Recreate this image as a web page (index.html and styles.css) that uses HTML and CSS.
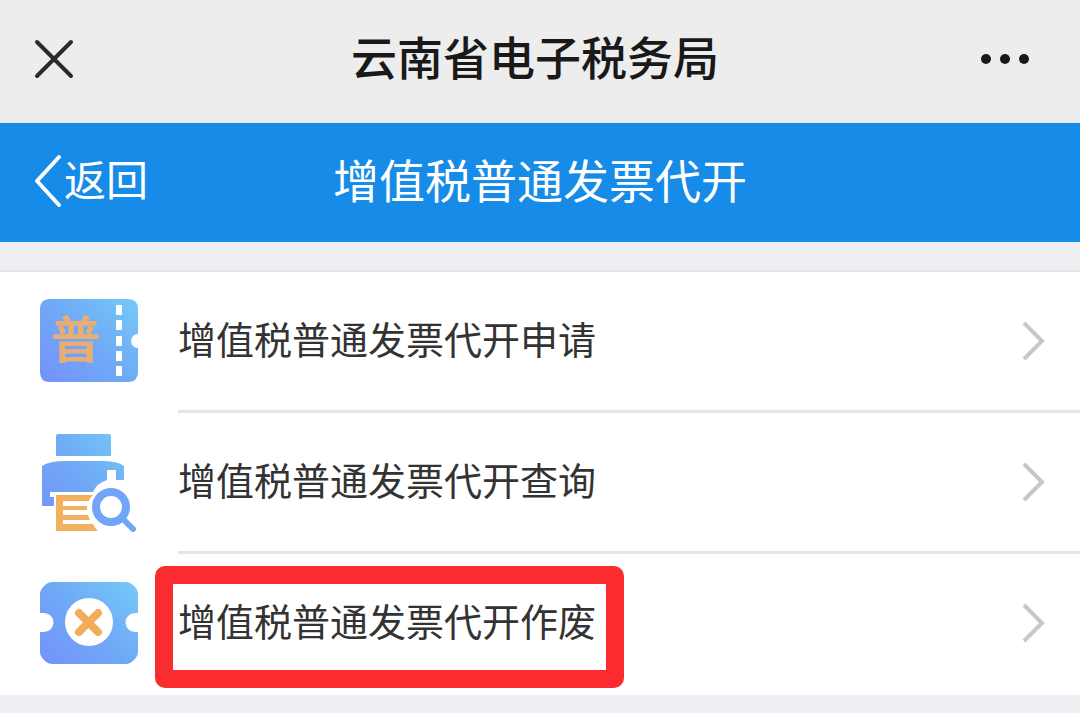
FILE: index.html
```html
<!DOCTYPE html>
<html lang="zh-CN">
<head>
<meta charset="utf-8">
<meta name="viewport" content="width=device-width, initial-scale=1">
<title>云南省电子税务局</title>
<link rel="stylesheet" href="styles.css">
</head>
<body>
<header class="bar app-bar">
  <button class="icon-button" type="button" aria-label="关闭">
    <svg class="close-icon" width="40" height="40" viewBox="0 0 40 40"><path d="M3 3L37 37M37 3L3 37"/></svg>
  </button>
  <h1 class="app-title">云南省电子税务局</h1>
  <button class="icon-button more-button" type="button" aria-label="更多">
    <svg class="more-icon" width="56" height="12" viewBox="0 0 56 12"><circle cx="6" cy="6" r="5"/><circle cx="25" cy="6" r="5"/><circle cx="44" cy="6" r="5"/></svg>
  </button>
</header>
<nav class="bar nav-bar">
  <a class="back" href="#">
    <svg class="back-icon" width="30" height="58" viewBox="0 0 30 58"><path d="M25 8L3 32L25 56"/></svg>
    <span>返回</span>
  </a>
  <h2 class="nav-title">增值税普通发票代开</h2>
</nav>
<main>
  <ul class="menu">
    <li>
      <a class="row" href="#">
        <svg class="row-icon" width="100" height="100" viewBox="0 0 100 100" aria-hidden="true">
          <defs>
            <linearGradient id="sky" gradientUnits="userSpaceOnUse" x1="0" y1="92" x2="92" y2="0">
              <stop offset="0" stop-color="#7590fb"/><stop offset=".5" stop-color="#70a9f6"/><stop offset="1" stop-color="#73cbf8"/>
            </linearGradient>
          </defs>
          <path fill="url(#sky)" d="M11 8H89Q99 8 99 18V43A7 7 0 0 0 99 57V81Q99 91 89 91H11Q1 91 1 81V18Q1 8 11 8Z"/>
          <path class="perforation" d="M80 14V24M80 29V39M80 45V55M80 60V70M80 75V85"/>
          <text class="stamp" x="37" y="67" text-anchor="middle">普</text>
        </svg>
        <span class="row-body"><span class="label">增值税普通发票代开申请</span>
        <svg class="chevron" width="24" height="40" viewBox="0 0 24 40"><path d="M2 2L20 20L2 38"/></svg></span>
      </a>
    </li>
    <li>
      <a class="row" href="#">
        <svg class="row-icon" width="100" height="100" viewBox="0 0 100 100" aria-hidden="true">
          <path fill="url(#sky)" d="M19 2H70Q72 2 72 4V24H17V4Q17 2 19 2Z"/>
          <path fill="url(#sky)" d="M3 34Q10 29 27 29H62Q79 29 85 34V48H77V38H68V48Q58 51 54 60H11V65H15V74H3Z"/>
          <path fill="#f2b25d" d="M17 63H54Q51 66 50 69H24V74H48V78H24V83H49Q50 86 51 88H24V92H54Q56 96 59 99H17Z"/>
          <circle cx="72" cy="75" r="15" fill="none" stroke="#71a5f7" stroke-width="8"/>
          <path d="M84 87L94 97" stroke="#71a5f7" stroke-width="6" stroke-linecap="round"/>
        </svg>
        <span class="row-body"><span class="label">增值税普通发票代开查询</span>
        <svg class="chevron" width="24" height="40" viewBox="0 0 24 40"><path d="M2 2L20 20L2 38"/></svg></span>
      </a>
    </li>
    <li>
      <a class="row" href="#">
        <svg class="row-icon" width="100" height="100" viewBox="0 0 100 100" aria-hidden="true">
          <path fill="url(#sky)" d="M13 9H87Q91 9 95 13T99 21V40H96A9 9 0 0 0 96 59H99V79Q99 83 95 87T87 91H13Q9 91 5 87T1 79V59H5A9 9 0 0 0 5 40H1V21Q1 17 5 13T13 9Z"/>
          <circle cx="50" cy="49" r="24" fill="#fff"/>
          <path d="M40 40L59 59M59 40L40 59" stroke="#f2ad5b" stroke-width="8" stroke-linecap="round"/>
        </svg>
        <span class="row-body"><span class="label highlighted">增值税普通发票代开作废</span>
        <svg class="chevron" width="24" height="40" viewBox="0 0 24 40"><path d="M2 2L20 20L2 38"/></svg></span>
      </a>
    </li>
  </ul>
</main>
</body>
</html>
```
FILE: styles.css
```css
* {
  box-sizing: border-box;
}

body {
  margin: 0;
  min-height: 100vh;
  background: #eeeef3;
  color: #333;
  font-family: "Noto Sans CJK SC", sans-serif;
}

h1,
h2,
ul {
  margin: 0;
  padding: 0;
}

a {
  color: inherit;
  text-decoration: none;
}

svg {
  display: block;
  flex: none;
}

.bar {
  display: grid;
  grid-template-columns: 1fr auto 1fr;
  align-items: center;
}

.app-bar {
  height: 123px;
  padding: 0 44px 6px 34px;
  background: #ededed;
}

.app-title,
.nav-title {
  grid-column: 2;
  font-size: 46px;
  line-height: 64px;
  font-weight: 500;
}

.app-title {
  margin-bottom: 8px;
  color: #191919;
}

.icon-button {
  justify-self: start;
  padding: 0;
  border: 0;
  background: none;
}

.more-button {
  justify-self: end;
}

.more-icon {
  fill: #191919;
}

.close-icon {
  fill: none;
  stroke: #2b2b2b;
  stroke-width: 4;
  stroke-linecap: round;
}

.nav-bar {
  height: 119px;
  padding: 0 34px 10px;
  background: #168be7;
  color: #fff;
}

.nav-title {
  font-weight: 400;
}

.back {
  display: flex;
  align-items: center;
  font-size: 42px;
  line-height: 60px;
}

.back-icon {
  fill: none;
  stroke: #fff;
  stroke-width: 4;
  stroke-linecap: round;
  stroke-linejoin: round;
}

.menu {
  margin-top: 28px;
  border-top: 2px solid #e5e5e8;
  background: #fff;
  list-style: none;
}

.row {
  display: flex;
  align-items: stretch;
  gap: 39px;
  padding-left: 39px;
}

.row-icon {
  align-self: center;
  margin-bottom: 4px;
}

.row-body {
  display: flex;
  flex: 1;
  align-items: center;
  justify-content: space-between;
  height: 141px;
  padding-right: 34px;
  border-bottom: 3px solid #e5e5e5;
}

li:last-child .row-body {
  border-bottom-color: transparent;
}

.label {
  position: relative;
  margin-bottom: 6px;
  font-size: 38px;
  line-height: 56px;
}

.highlighted::after {
  content: "";
  position: absolute;
  inset: -26px -28px -40px -23px;
  border: 18px solid #fb2c2f;
  border-radius: 10px;
}

.chevron {
  fill: none;
  stroke: #c7c7c7;
  stroke-width: 4;
}

.perforation {
  fill: none;
  stroke: #fff;
  stroke-width: 6;
}

.stamp {
  fill: #e7ad72;
  font-size: 50px;
  font-weight: 700;
}
```
